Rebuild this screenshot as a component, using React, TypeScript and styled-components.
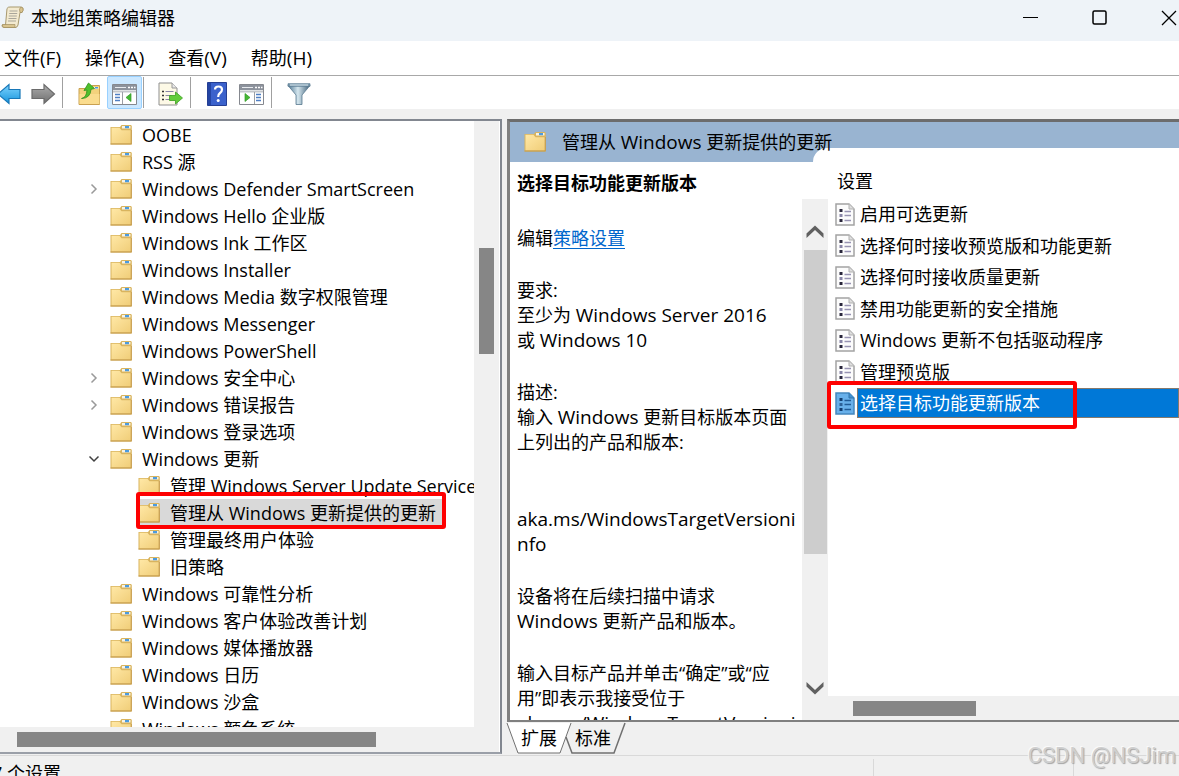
import React from "react";
import styled, { createGlobalStyle, css } from "styled-components";

const GlobalStyle = createGlobalStyle`
  *, *::before, *::after { box-sizing: border-box; }
  body {
    margin: 0;
    background: #f0f0f0;
    color: #000;
    font-family: "Open Sans", "Noto Sans CJK SC", sans-serif;
    font-size: 18px;
    line-height: 26px;
  }
  button { font: inherit; color: inherit; border: 0; padding: 0; background: none; text-align: left; }
  ul { list-style: none; margin: 0; padding: 0; }
  h1, h2, p { margin: 0; font-size: inherit; font-weight: inherit; }
  svg { display: block; flex: none; }
`;

const LatinText = styled.span`
  font-size: 19px;
  line-height: 1;
`;

const Window = styled.div`
  display: flex;
  flex-direction: column;
  height: 100vh;
  overflow: hidden;
`;

const TitleBar = styled.header`
  display: flex;
  align-items: center;
  height: 41px;
  flex: none;
  padding: 0 0 6px 1px;
  background: #eef3f8;
`;

const WindowTitle = styled.h1`
  flex: 1;
  padding-left: 7px;
`;

const CaptionButtons = styled.div`
  display: flex;
  gap: 53px;
  padding-right: 2px;
`;

const MenuBar = styled.nav`
  display: flex;
  flex: none;
  gap: 24px;
  height: 35px;
  padding: 4px 4px 0;
  background: #fff;
  border-bottom: 1px solid #a8a8a8;
`;

const MenuItem = styled.button`
  height: 26px;
  white-space: nowrap;
`;

const Toolbar = styled.div`
  display: flex;
  flex: none;
  align-items: center;
  height: 33px;
  background: #fff;
`;

const ToolButton = styled.button<{ $active?: boolean }>`
  display: flex;
  align-items: center;
  justify-content: center;
  width: 35px;
  height: 33px;
  padding-top: 3px;
  border: 1px solid transparent;
  border-width: 1px 0;
  ${(p) => p.$active && css`background: #cce8ff; border: 1px solid #99d1ff; border-radius: 2px;`}
`;

const BackButton = styled(ToolButton)`
  width: 26px;
  justify-content: flex-start;
`;

const Divider = styled.span<{ $before?: number; $after?: number }>`
  width: 1px;
  height: 31px;
  margin: 0 ${(p) => p.$after ?? 0}px 0 ${(p) => p.$before ?? 0}px;
  background: #a0a0a0;
`;

const Main = styled.main`
  display: flex;
  flex: 1;
  gap: 5px;
  min-height: 0;
  padding-top: 10px;
`;

const TreePane = styled.section`
  display: grid;
  grid-template-columns: 1fr 25px;
  grid-template-rows: 1fr 25px;
  flex: 0 0 502px;
  min-height: 0;
  margin-bottom: 1px;
  padding-right: 1px;
  background: #fff;
  border: solid #828790;
  border-width: 2px 2px 2px 0;
  border-bottom-color: #9a9fa8;
`;

const TreeView = styled.div`
  min-height: 0;
  overflow: hidden;
`;

const TreeRow = styled.li<{ $depth: number }>`
  position: relative;
  display: flex;
  align-items: center;
  height: 27px;
  padding-left: ${(p) => (p.$depth ? 114 : 86)}px;
`;

const TreeItem = styled.button<{ $selected?: boolean }>`
  display: flex;
  align-items: center;
  gap: 10px;
  height: 27px;
  padding-right: 6px;
  white-space: nowrap;
  ${(p) => p.$selected && css`background: #d9d9d9;`}
`;

const Twisty = styled.span`
  display: flex;
  flex: none;
  justify-content: center;
  width: 16px;
  margin-right: 8px;
`;

const Callout = styled.span<{ $edges: string }>`
  position: absolute;
  inset: ${(p) => p.$edges};
  border: 4px solid #fe0000;
  border-radius: 3px;
  pointer-events: none;
`;

const VScroll = styled.div<{ $pad: string }>`
  padding: ${(p) => p.$pad};
  background: #f0f0f0;
`;

const HScroll = styled.div<{ $pad: string }>`
  grid-column: 1 / -1;
  padding: ${(p) => p.$pad};
  background: #f0f0f0;
`;

const Thumb = styled.div<{ $w?: number; $h?: number }>`
  width: ${(p) => (p.$w ? `${p.$w}px` : "100%")};
  height: ${(p) => p.$h ?? 15}px;
  background: #868686;
`;

const ResultColumn = styled.section`
  display: flex;
  flex: 1;
  flex-direction: column;
  min-width: 0;
  min-height: 0;
`;

const ResultPane = styled.div`
  display: flex;
  flex: 1;
  flex-direction: column;
  min-height: 0;
  background: #fff;
  border: solid #808080;
  border-width: 3px 0 2px 3px;
  border-top-color: #6c6c6c;
`;

const ResultHeader = styled.div`
  display: flex;
  flex: none;
  align-items: center;
  gap: 16px;
  height: 40px;
  padding-left: 14px;
  background: #99b4d1;
`;

const HeaderText = styled.h2`
  position: relative;
  z-index: 1;
  white-space: nowrap;
`;

const ResultBody = styled.div`
  display: grid;
  flex: 1;
  grid-template-columns: 292px 26px minmax(0, 1fr);
  grid-template-rows: 37px minmax(0, 1fr);
  min-height: 0;
`;

const Description = styled.article`
  display: flex;
  grid-row: 1 / 3;
  flex-direction: column;
  gap: 27px;
  min-height: 0;
  padding: 9px 0 0 7px;
  overflow: hidden;
  line-height: 25px;
`;

const PolicyName = styled.h2`
  margin-bottom: 3px;
  font-weight: 700;
`;

const Paragraph = styled.p<{ $spaced?: boolean }>`
  margin-top: ${(p) => (p.$spaced ? 25 : 0)}px;
  white-space: pre;
`;

const PolicyLink = styled.a`
  color: #0066cc;
  text-underline-offset: 3px;
`;

const ColumnHeader = styled.div`
  grid-column: 2 / 4;
  margin: -14px 0 0 11px;
  padding: 20px 0 0 24px;
  background: #fff;
  border-top-left-radius: 14px;
`;

const DescriptionScroll = styled.div`
  display: flex;
  grid-column: 2;
  flex-direction: column;
  align-items: center;
  padding: 26px 1px 25px;
  background: #f0f0f0;
`;

const ScrollTrack = styled.div`
  flex: 1;
  width: 100%;
  padding: 11px 0 14px 1px;
`;

const LightThumb = styled.div`
  width: 23px;
  height: 73%;
  background: #cdcdcd;
`;

const ListArea = styled.div`
  display: flex;
  flex-direction: column;
  min-height: 0;
`;

const SettingsList = styled.ul`
  display: flex;
  flex-direction: column;
  justify-content: space-between;
  height: 219px;
  margin-bottom: auto;
`;

const SettingRow = styled.li`
  position: relative;
  display: flex;
  align-items: center;
  height: 30px;
  padding-left: 7px;
`;

const SettingLabel = styled.button<{ $selected?: boolean }>`
  flex: 1;
  height: 30px;
  margin-left: 2px;
  padding: 0 2px;
  border: 1px solid transparent;
  white-space: nowrap;
  ${(p) => p.$selected && css`color: #fff; background: #0078d7; border-color: #85796c;`}
`;

const TabStrip = styled.div`
  display: flex;
  flex: none;
  height: 33px;
`;

const Tab = styled.button<{ $second?: boolean }>`
  position: relative;
  width: ${(p) => (p.$second ? 60 : 64)}px;
  height: 32px;
  margin-left: ${(p) => (p.$second ? 1 : 0)}px;
  padding-left: ${(p) => (p.$second ? 3 : 14)}px;
  white-space: nowrap;
`;

const TabShape = styled.svg`
  position: absolute;
  top: 0;
  left: 0;
  overflow: visible;
`;

const TabText = styled.span`
  position: relative;
`;

const StatusBar = styled.footer`
  display: grid;
  grid-template-columns: minmax(0, 1fr) 200px 105px;
  flex: none;
  height: 21px;
  padding-top: 3px;
  border-top: 1px solid #d9d9d9;
`;

const StatusCell = styled.div`
  height: 30px;
  padding-top: 1px;
  border-right: 1px solid #d9d9d9;
`;

const StatusText = styled.span`
  margin-left: -8px;
`;

const Watermark = styled.div`
  position: absolute;
  right: 3px;
  bottom: 7px;
  color: #cfcfcf;
  font: 22px/26px Roboto, sans-serif;
  text-shadow: 1px 1px 1px #a4a4a4, -1px -1px 0 #fafafa;
`;

const FolderIcon = () => (
  <svg width="22" height="20" viewBox="0 0 22 20">
    <defs>
      <linearGradient id="folder" x1="0" y1="0" x2="1" y2="1">
        <stop offset="0" stopColor="#ffe8a6" />
        <stop offset="1" stopColor="#f0cd78" />
      </linearGradient>
    </defs>
    <path d="M.5 2H10l1.500-2H21l.8 1V19.500H.5z" fill="#d9b45e" />
    <path d="M12 1h8.500v2.500H12z" fill="#f7f3e4" />
    <path d="M15 1h4v2.200h-4z" fill="#4b9be0" />
    <path d="M1.500 2.800H9.500l2 2.500h9.500V18.500H1.500z" fill="url(#folder)" />
    <path d="M.5 19h21M21.200 5v14" stroke="#c2994a" fill="none" />
  </svg>
);

const ScrollIcon = () => (
  <svg width="23" height="23" viewBox="0 0 23 23">
    <path d="M6 2.500Q7 .8 9 1h11q2.500.3 2 3l-1 2.500h-2L17 19q-.5 2.500-3 2.500H3Q.8 21.500 1 19h3.500z" fill="#f3ead0" stroke="#a8996f" />
    <path d="M19 6.500q-1.500-4 1-5.500 3 .5 2 3.500l-1 2zM4 18.500h10q-.5 3 .5 3H3q-2-.5-1.500-3z" fill="#d9c48f" stroke="#a08e60" strokeWidth=".7" />
    <path d="M8.500 5h8M8.200 7.500h8M7.800 10h8M7.500 12.500h8M7 15h8" stroke="#a9a59a" strokeWidth="1.200" />
  </svg>
);

const ArrowIcon = ({ forward = false }: { forward?: boolean }) => (
  <svg width={forward ? 26 : 22} height="22" viewBox={forward ? "0 0 26 22" : "0 0 22 22"}>
    <defs>
      <linearGradient id={forward ? "fwd" : "back"} x1="0" y1="0" x2="0" y2="1">
        <stop offset="0" stopColor={forward ? "#adadad" : "#7fd4ff"} />
        <stop offset="1" stopColor={forward ? "#6f6f6f" : "#1594dc"} />
      </linearGradient>
    </defs>
    {forward ? (
      <path d="M1 6.500H13V1.500L23.500 11 13 20.500v-5H1z" fill="url(#fwd)" stroke="#6b6b6b" strokeWidth="1.200" />
    ) : (
      <path d="M20 6.500H9V1.500L-2 11 9 20.500v-5h11z" fill="url(#back)" stroke="#1878b8" strokeWidth="1.200" />
    )}
  </svg>
);

const UpFolderIcon = () => (
  <svg width="23" height="24" viewBox="0 0 23 24">
    <path d="M1 6.500h11l2-3h7.500V22.500H1z" fill="#f3d27d" stroke="#c9a050" />
    <path d="M14.500 5h6v2h-6z" fill="#fff6d8" />
    <path d="M17 5h3v1.500h-3z" fill="#4b9be0" />
    <path d="M1.500 12h20v10h-20z" fill="#fbdf92" opacity=".8" />
    <path d="M3.500 16.500q5-1 5.500-8.500L6 8.500 10.500 1l6 5.500-3.500.8q-.5 9-9.500 9.200z" fill="#4fc02c" stroke="#2d8f1a" strokeWidth=".8" />
  </svg>
);

const PaneIcon = ({ right = false }: { right?: boolean }) => (
  <svg width="25" height="21" viewBox="0 0 25 21">
    <path d="M.5.500h24v20H.5z" fill="#fff" stroke="#85888f" />
    <path d="M1 1h23v5H1z" fill="#8c929c" />
    <path d="M3 3.500h11" stroke="#e8ebef" />
    <path d="M16 3.500h2m1 0h2m1 0h1.500" stroke="#fff" strokeWidth="1.500" />
    <path d="M1 7.500h23" stroke="#c3c6cb" strokeWidth="2" />
    <g transform={right ? "translate(14 0)" : undefined}>
      <path d="M3 10.500h5M3 13.500h5M3 16.500h5" stroke="#4f7fc4" strokeWidth="1.500" />
    </g>
    <path d={right ? "M15.500 8v12" : "M10.500 8v12"} stroke="#9b9ea4" />
    <path d={right ? "M6 9.500v8l5-4z" : "M19 9.500v8l-5-4z"} fill="#45b733" stroke="#329a25" strokeWidth=".7" />
  </svg>
);

const ExportIcon = () => (
  <svg width="25" height="24" viewBox="0 0 25 24">
    <path d="M1 1h13l5 5v17H1z" fill="#fdf9e6" stroke="#8f8f8f" />
    <path d="M14 1v5h5" fill="#e8e8e8" stroke="#9a9a9a" />
    <path d="M4 9.500h2M4 13.500h2M4 17.500h2" stroke="#333" strokeWidth="1.500" />
    <path d="M7.500 9.500h8M7.500 13.500h6M7.500 17.500h6" stroke="#8a86a8" />
    <path d="M11.500 13.500h6V10l7 6-7 6v-3.500h-6z" fill="#63cd3b" stroke="#3b9f22" strokeWidth=".8" />
  </svg>
);

const HelpIcon = () => (
  <svg width="20" height="24" viewBox="0 0 20 24">
    <path d="M.5.500h19v23H.5z" fill="#3b62cc" stroke="#253f94" />
    <path d="M1 1h3v22H1z" fill="#2445a4" />
    <path d="M8 7.500Q8 4.500 11.500 4.500t3.500 3q0 2-2 3.500t-1.800 4" fill="none" stroke="#fff" strokeWidth="2.200" />
    <circle cx="11.200" cy="18.500" r="1.500" fill="#fff" />
  </svg>
);

const FilterIcon = () => (
  <svg width="24" height="22" viewBox="0 0 24 22">
    <defs>
      <linearGradient id="funnel">
        <stop offset="0" stopColor="#4c7490" />
        <stop offset=".45" stopColor="#d4e6ee" />
        <stop offset="1" stopColor="#3f6079" />
      </linearGradient>
    </defs>
    <path d="M1 2.500L9 12v9.500h6V12l8-9.500z" fill="url(#funnel)" stroke="#58788f" strokeWidth=".8" />
    <path d="M1 .7h22v2.600H1z" fill="#7e9cb0" stroke="#58788f" strokeWidth=".7" />
    <path d="M3 2h18" stroke="#d9e8f0" />
  </svg>
);

const PolicyIcon = ({ selected = false }: { selected?: boolean }) => (
  <svg width="20" height="23" viewBox="0 0 20 23">
    <path d="M1 1h13l5 5v16H1z" fill={selected ? "#68b0ea" : "#fcfcfc"} stroke={selected ? "#4387be" : "#a3a3a3"} strokeWidth="1.500" />
    <path d="M14 1v5h5" fill={selected ? "#3e91d4" : "#dedede"} stroke={selected ? "#3474a8" : "#b0b0b0"} />
    <path d="M4.500 7.500h3M4.500 17.500h3" stroke={selected ? "#123e70" : "#29263b"} strokeWidth="3" />
    <path d="M4.500 12.500h3" stroke={selected ? "#2d6299" : "#8a87a8"} strokeWidth="3" />
    <path d="M9.500 8.500H16M9.500 12.500H16M9.500 17.500H16" stroke={selected ? "#205b97" : "#9894b3"} strokeWidth="1.300" />
  </svg>
);

const ScrollArrow = ({ down = false }: { down?: boolean }) => (
  <svg width="18" height="14" viewBox="0 0 18 14">
    <path d={down ? "M.5 1L9 9l8.500-8v4.500L9 13.500.5 5.500z" : "M.5 13L9 5l8.500 8V8.500L9 .5.5 8.500z"} fill="#606060" />
  </svg>
);

/** Sets the Latin runs of a mixed string one size larger than the Chinese text. */
const Mixed = ({ text }: { text: string }) => (
  <>
    {text.split(/([A-Za-z0-9()./]+(?: [A-Za-z0-9]+)*)/).map((run, i) =>
      i % 2 ? <LatinText key={i}>{run}</LatinText> : run,
    )}
  </>
);

type Node = { label: string; depth?: number; state?: "open" | "closed"; selected?: boolean };

const nodes: Node[] = [
  { label: "OOBE" },
  { label: "RSS 源" },
  { label: "Windows Defender SmartScreen", state: "closed" },
  { label: "Windows Hello 企业版" },
  { label: "Windows Ink 工作区" },
  { label: "Windows Installer" },
  { label: "Windows Media 数字权限管理" },
  { label: "Windows Messenger" },
  { label: "Windows PowerShell" },
  { label: "Windows 安全中心", state: "closed" },
  { label: "Windows 错误报告", state: "closed" },
  { label: "Windows 登录选项" },
  { label: "Windows 更新", state: "open" },
  { label: "管理 Windows Server Update Service", depth: 1 },
  { label: "管理从 Windows 更新提供的更新", depth: 1, selected: true },
  { label: "管理最终用户体验", depth: 1 },
  { label: "旧策略", depth: 1 },
  { label: "Windows 可靠性分析" },
  { label: "Windows 客户体验改善计划" },
  { label: "Windows 媒体播放器" },
  { label: "Windows 日历" },
  { label: "Windows 沙盒" },
  { label: "Windows 颜色系统" },
];

const settings = [
  "启用可选更新",
  "选择何时接收预览版和功能更新",
  "选择何时接收质量更新",
  "禁用功能更新的安全措施",
  "Windows 更新不包括驱动程序",
  "管理预览版",
  "选择目标功能更新版本",
];

const paragraphs = [
  { text: "要求:\n至少为 Windows Server 2016\n或 Windows 10" },
  { text: "描述:\n输入 Windows 更新目标版本页面\n上列出的产品和版本:" },
  { text: "aka.ms/WindowsTargetVersioni\nnfo", spaced: true },
  { text: "设备将在后续扫描中请求\nWindows 更新产品和版本。" },
  { text: "输入目标产品并单击“确定”或“应\n用”即表示我接受位于\naka.ms/WindowsTargetVersioni" },
];

export default function App() {
  return (
    <Window>
      <GlobalStyle />
      <TitleBar>
        <ScrollIcon />
        <WindowTitle>本地组策略编辑器</WindowTitle>
        <CaptionButtons>
          <button aria-label="最小化">
            <svg width="16" height="16"><path d="M0 7.500h15" stroke="#000" /></svg>
          </button>
          <button aria-label="最大化">
            <svg width="16" height="16"><rect x="1" y="1" width="13" height="13" rx="1.500" fill="none" stroke="#000" strokeWidth="1.500" /></svg>
          </button>
          <button aria-label="关闭">
            <svg width="16" height="16"><path d="M1 1l14 14M15 1L1 15" stroke="#000" strokeWidth="1.300" /></svg>
          </button>
        </CaptionButtons>
      </TitleBar>

      <MenuBar>
        {["文件(F)", "操作(A)", "查看(V)", "帮助(H)"].map((m) => (
          <MenuItem key={m}><Mixed text={m} /></MenuItem>
        ))}
      </MenuBar>

      <Toolbar>
        <BackButton aria-label="后退"><ArrowIcon /></BackButton>
        <ToolButton aria-label="前进"><ArrowIcon forward /></ToolButton>
        <Divider $before={1} $after={9} />
        <ToolButton aria-label="上一级"><UpFolderIcon /></ToolButton>
        <ToolButton aria-label="显示/隐藏控制台树" $active><PaneIcon /></ToolButton>
        <Divider $before={1} $after={9} />
        <ToolButton aria-label="导出列表"><ExportIcon /></ToolButton>
        <Divider $before={2} $after={8} />
        <ToolButton aria-label="帮助"><HelpIcon /></ToolButton>
        <ToolButton aria-label="显示/隐藏操作窗格"><PaneIcon right /></ToolButton>
        <Divider $before={2} $after={9} />
        <ToolButton aria-label="筛选器"><FilterIcon /></ToolButton>
      </Toolbar>

      <Main>
        <TreePane>
          <TreeView>
            <ul>
              {nodes.map((n) => (
                <TreeRow key={n.label} $depth={n.depth ?? 0}>
                  <Twisty>
                    {n.state === "closed" && (
                      <svg width="8" height="12"><path d="M1.500 1.500L6 6l-4.500 4.500" fill="none" stroke="#9a9a9a" strokeWidth="1.500" /></svg>
                    )}
                    {n.state === "open" && (
                      <svg width="12" height="8"><path d="M1.500 1.500L6 6l4.500-4.500" fill="none" stroke="#404040" strokeWidth="1.500" /></svg>
                    )}
                  </Twisty>
                  <TreeItem $selected={n.selected}>
                    <FolderIcon />
                    {n.label}
                  </TreeItem>
                  {n.selected && <Callout $edges="-7px 28px -3px 136px" />}
                </TreeRow>
              ))}
            </ul>
          </TreeView>
          <VScroll $pad="127px 5px 0"><Thumb $h={106} /></VScroll>
          <HScroll $pad="5px 0 0 17px"><Thumb $w={359} /></HScroll>
        </TreePane>

        <ResultColumn>
          <ResultPane>
            <ResultHeader>
              <FolderIcon />
              <HeaderText><Mixed text="管理从 Windows 更新提供的更新" /></HeaderText>
            </ResultHeader>
            <ResultBody>
              <Description>
                <PolicyName>选择目标功能更新版本</PolicyName>
                <Paragraph>编辑<PolicyLink href="#">策略设置</PolicyLink></Paragraph>
                {paragraphs.map((p) => (
                  <Paragraph key={p.text} $spaced={p.spaced}><Mixed text={p.text} /></Paragraph>
                ))}
              </Description>
              <ColumnHeader>设置</ColumnHeader>
              <DescriptionScroll>
                <ScrollArrow />
                <ScrollTrack><LightThumb /></ScrollTrack>
                <ScrollArrow down />
              </DescriptionScroll>
              <ListArea>
                <SettingsList>
                  {settings.map((s, i) => {
                    const selected = i === settings.length - 1;
                    return (
                      <SettingRow key={s}>
                        <PolicyIcon selected={selected} />
                        <SettingLabel $selected={selected}>{s}</SettingLabel>
                        {selected && <Callout $edges="-7px 102px -11px -1px" />}
                      </SettingRow>
                    );
                  })}
                </SettingsList>
                <HScroll $pad="5px 0 4px 25px"><Thumb $w={123} /></HScroll>
              </ListArea>
            </ResultBody>
          </ResultPane>
          <TabStrip>
            <Tab>
              <TabShape width="64" height="32">
                <path d="M0 1l11 30h42L64 1" fill="#fff" stroke="#707070" />
              </TabShape>
              <TabText>扩展</TabText>
            </Tab>
            <Tab $second>
              <TabShape width="60" height="32">
                <path d="M-6 15l6 16h42L53 1" fill="none" stroke="#707070" strokeWidth="1.500" />
              </TabShape>
              <TabText>标准</TabText>
            </Tab>
          </TabStrip>
        </ResultColumn>
      </Main>

      <StatusBar>
        <StatusCell><StatusText>7 个设置</StatusText></StatusCell>
        <StatusCell />
      </StatusBar>
      <Watermark>CSDN @NSJim</Watermark>
    </Window>
  );
}
